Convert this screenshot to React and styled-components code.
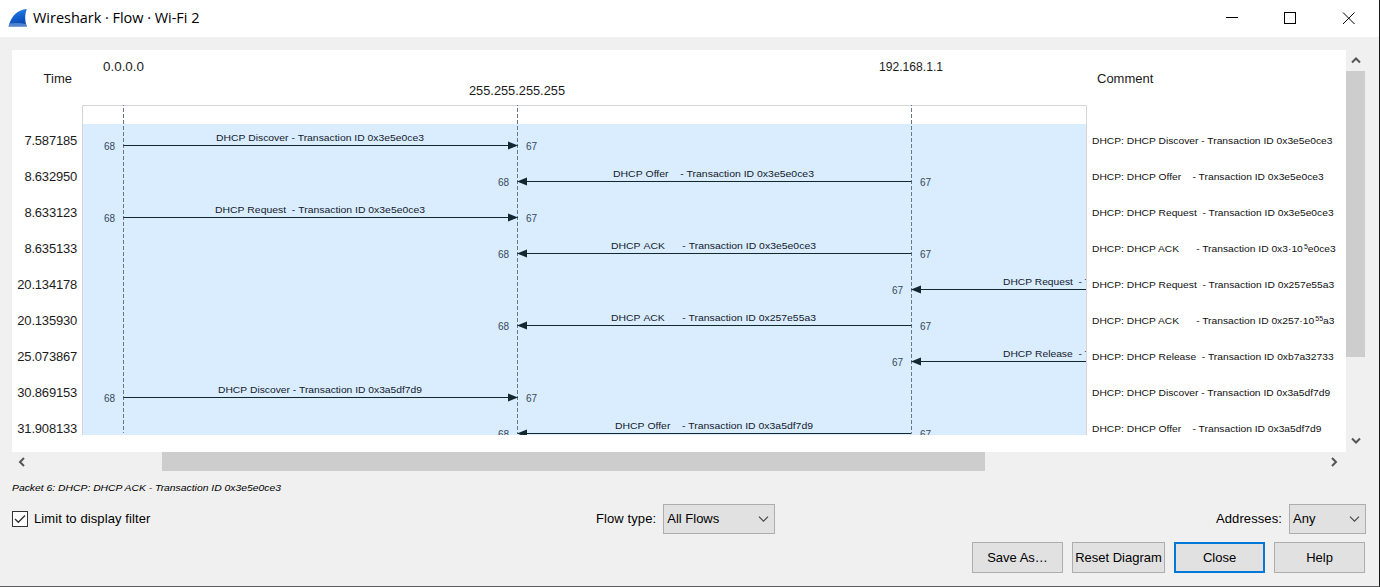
import React from "react";
import styled, { createGlobalStyle } from "styled-components";

const GlobalStyle = createGlobalStyle`
  *, *::before, *::after { box-sizing: border-box; }
  html, body { margin: 0; padding: 0; overflow: hidden; }
  body {
    background: #f0f0f0;
    color: #000;
    font-family: "Liberation Sans", Arial, sans-serif;
    font-size: 13px;
  }
`;

const Window = styled.div`
  display: flex;
  flex-direction: column;
  width: 1380px;
  height: 587px;
  background: #f0f0f0;
  border-right: 1px solid #161616;
  border-bottom: 1px solid #5c5c5e;
  overflow: hidden;
`;

const TitleBar = styled.header`
  display: flex;
  align-items: center;
  height: 37px;
  flex: none;
  padding: 0 24px 0 8px;
  background: #fff;
`;

const Title = styled.h1`
  flex: 1;
  margin: 0 0 0 5px;
  padding-bottom: 2px;
  font: 400 14.5px/20px "Open Sans", "Noto Sans", sans-serif;
  letter-spacing: ${(p) => p.$spacing}px;
  white-space: pre;
`;

const WindowControls = styled.div`
  display: flex;
  gap: 45px;
`;

const Body = styled.main`
  display: flex;
  flex-direction: column;
  padding: 13px 13px 0 12px;
`;

const Viewer = styled.section`
  display: grid;
  grid-template-columns: 1334px 19px;
  grid-template-rows: 402px 19px;
`;

const Canvas = styled.div`
  display: grid;
  grid-template-columns: 70px 1005px 1fr;
  background: #fff;
`;

const Column = styled.div`
  display: flex;
  flex-direction: column;
  min-width: 0;
`;

const ColumnTitle = styled.div`
  height: 73px;
  padding: 21px ${(p) => p.$right || 0}px 0 ${(p) => p.$left || 0}px;
  text-align: ${(p) => p.$align || "left"};
  font-size: 13px;
  line-height: 16px;
  color: #1a1a1a;
`;

const TimeCell = styled.div`
  height: 36px;
  padding-right: 5px;
  text-align: right;
  line-height: 36px;
  letter-spacing: -0.2px;
  color: #1c1c1c;
`;

const CommentCell = styled.div`
  width: max-content;
  height: 36px;
  margin-left: 5px;
  font-size: 9.5px;
  line-height: 36px;
  white-space: pre;
  color: #111;
  transform: scaleX(1.08);
  transform-origin: left center;
`;

const Exponent = styled.span`
  margin-left: 1px;
  font-size: 6.5px;
  line-height: 1;
  vertical-align: 3px;
`;

const Scrollbar = styled.div`
  display: flex;
  flex-direction: ${(p) => (p.$vertical ? "column" : "row")};
  justify-content: space-between;
  padding: ${(p) => (p.$vertical ? "0 0 2px" : "0 2px 0 0")};
`;

const ScrollArrow = styled.div`
  display: flex;
  align-items: center;
  justify-content: center;
  width: ${(p) => (p.$vertical ? 19 : 20)}px;
  height: ${(p) => (p.$vertical ? 20 : 19)}px;
  flex: none;
`;

const ScrollTrack = styled.div`
  display: flex;
  flex: 1;
  padding: ${(p) => (p.$vertical ? "1px 0 0" : "0 0 0 130px")};
`;

const ScrollThumb = styled.div`
  width: ${(p) => (p.$vertical ? "19px" : "823px")};
  height: ${(p) => (p.$vertical ? "286px" : "19px")};
  background: #cdcdcd;
`;

const Status = styled.p`
  width: max-content;
  margin: 10px 0 0;
  font-size: 9.5px;
  line-height: 13px;
  font-style: italic;
  transform: scaleX(1.09);
  transform-origin: left center;
`;

const Options = styled.div`
  display: grid;
  grid-template-columns: 584px auto 1fr;
  align-items: center;
  height: 30px;
  margin-top: 10px;
`;

const CheckLabel = styled.label`
  display: flex;
  align-items: center;
  gap: 6px;
  line-height: 16px;
  letter-spacing: 0.1px;
`;

const CheckBox = styled.span`
  display: grid;
  place-items: center;
  width: 16px;
  height: 16px;
  border: 1px solid #333;
  background: #fff;
`;

const Field = styled.div`
  display: flex;
  align-items: center;
  justify-content: ${(p) => (p.$end ? "flex-end" : "flex-start")};
  gap: 7px;
`;

const FieldLabel = styled.span`
  padding-bottom: 1px;
  letter-spacing: 0.1px;
`;

const Select = styled.div`
  display: flex;
  align-items: center;
  justify-content: space-between;
  width: ${(p) => p.$width}px;
  height: 30px;
  padding: 0 5px 1px 3px;
  border: 1px solid #adadad;
  background: #e1e1e1;
`;

const Actions = styled.div`
  display: flex;
  justify-content: flex-end;
  gap: 9px;
  margin-top: 8px;
  padding-right: 1px;
`;

const Button = styled.button`
  width: ${(p) => p.$width || 91}px;
  height: 31px;
  margin: 0;
  padding: 0;
  border: ${(p) => (p.$primary ? "2px solid #0078d7" : "1px solid #adadad")};
  background: #e1e1e1;
  color: #000;
  font: 13px "Liberation Sans", Arial, sans-serif;
  white-space: nowrap;
`;

const Plot = styled.svg`
  display: block;
  font-family: "Liberation Sans", Arial, sans-serif;
`;

const flows = [
  { time: "7.587185", from: 0, to: 1, label: "DHCP Discover - Transaction ID 0x3e5e0ce3", x: 216, end: 424 },
  { time: "8.632950", from: 2, to: 1, label: "DHCP Offer    - Transaction ID 0x3e5e0ce3", x: 613, end: 814 },
  { time: "8.633123", from: 0, to: 1, label: "DHCP Request  - Transaction ID 0x3e5e0ce3", x: 215, end: 425 },
  { time: "8.635133", from: 2, to: 1, label: "DHCP ACK      - Transaction ID 0x3e5e0ce3", x: 611, end: 816, comment: ["DHCP ACK      - Transaction ID 0x3·10", "5", "e0ce3"] },
  { time: "20.134178", from: 3, to: 2, label: "DHCP Request  - Transaction ID 0x257e55a3", visible: "DHCP Request  - T", x: 1003, end: 1091 },
  { time: "20.135930", from: 2, to: 1, label: "DHCP ACK      - Transaction ID 0x257e55a3", x: 611, end: 816, comment: ["DHCP ACK      - Transaction ID 0x257·10", "55", "a3"] },
  { time: "25.073867", from: 3, to: 2, label: "DHCP Release  - Transaction ID 0xb7a32733", visible: "DHCP Release  - T", x: 1003, end: 1091 },
  { time: "30.869153", from: 0, to: 1, label: "DHCP Discover - Transaction ID 0x3a5df7d9", x: 218, end: 422 },
  { time: "31.908133", from: 2, to: 1, label: "DHCP Offer    - Transaction ID 0x3a5df7d9", x: 615, end: 813 },
];

const lanes = [123.5, 517.5, 911.5, 1305.5];

const hosts = [
  { name: "0.0.0.0", x: 103, width: 41, y: 71 },
  { name: "255.255.255.255", x: 469, width: 96, y: 95 },
  { name: "192.168.1.1", x: 879, width: 64, y: 71 },
];

function FlowArrow({ flow, index }) {
  const y = 145.5 + index * 36;
  const from = lanes[flow.from];
  const to = lanes[flow.to];
  const dir = to > from ? 1 : -1;
  const left = Math.min(from, to);
  const right = Math.max(from, to);
  const leftPort = dir > 0 || flow.to === 1 ? "68" : "67";
  return (
    <g>
      <path d={`M${from} ${y}H${to}`} stroke="#12272e" />
      <path d={`M${to + 0.5 * dir} ${y}l${-10 * dir} -4v8z`} fill="#12272e" />
      <text
        x={flow.x}
        y={y - 4.5}
        fontSize="9.5"
        fill="#13202b"
        textLength={flow.end - flow.x}
        lengthAdjust="spacingAndGlyphs"
      >
        {(flow.visible || flow.label).replace(/ /g, "\u00a0")}
      </text>
      <g fontSize="10" fill="#34495a">
        <text x={left - 19.5} y={y + 4.5}>{leftPort}</text>
        {right < 1086 && <text x={right + 8.5} y={y + 4.5}>67</text>}
      </g>
    </g>
  );
}

function FlowPlot() {
  return (
    <Plot width="1005" height="385" viewBox="82 50 1005 385">
      <path d="M82.5 435V105.5H1086.5V435" fill="none" stroke="#d3d5d8" />
      <rect x="83" y="124" width="1003" height="311" fill="#daedff" />
      {hosts.map((h) => (
        <text key={h.name} x={h.x} y={h.y} fontSize="13" fill="#1c1c1c" textLength={h.width} lengthAdjust="spacingAndGlyphs">
          {h.name}
        </text>
      ))}
      {lanes.slice(0, 3).map((x) => (
        <path key={x} d={`M${x} 105V433`} stroke="#66788a" strokeDasharray="4 2" strokeDashoffset="-3" />
      ))}
      <svg x="82" y="50" width="1004" height="385" viewBox="82 50 1004 385">
        {flows.map((f, i) => (
          <FlowArrow key={f.time} flow={f} index={i} />
        ))}
      </svg>
    </Plot>
  );
}

const arrowPaths = {
  up: "M1 7.5 5 3.5 9 7.5",
  down: "M1 3.5 5 7.5 9 3.5",
  left: "M7 1 3 5 7 9",
  right: "M3 1 7 5 3 9",
};

function Arrow({ direction }) {
  return (
    <ScrollArrow $vertical={direction === "up" || direction === "down"}>
      <svg width="10" height="10" viewBox="0 0 10 10" fill="none" stroke="#555" strokeWidth="2">
        <path d={arrowPaths[direction]} />
      </svg>
    </ScrollArrow>
  );
}

function Chevron() {
  return (
    <svg width="11" height="7" viewBox="0 0 11 7" fill="none" stroke="#444" strokeWidth="1.1">
      <path d="M1 1.7 5.5 6.2 10 1.7" />
    </svg>
  );
}

function FinLogo() {
  return (
    <svg width="20" height="19" viewBox="0 0 20 19">
      <defs>
        <linearGradient id="fin" x1="0" y1="0" x2="0.3" y2="1">
          <stop offset="0" stopColor="#2f8cec" />
          <stop offset="0.55" stopColor="#1260d0" />
          <stop offset="1" stopColor="#0b48ad" />
        </linearGradient>
      </defs>
      <path d="M0.5 17.5C3 7.5 9 0.8 18.8 0C16.8 5 16.6 12 19 17.5Z" fill="url(#fin)" />
      <path d="M0.5 17.5L1.6 14.6Q9 13.2 18 14.9L19 17.5Z" fill="#6f9ddd" opacity="0.7" />
    </svg>
  );
}

export default function App() {
  return (
    <>
      <GlobalStyle />
      <Window>
        <TitleBar>
          <FinLogo />
          <Title $spacing={-0.03}>Wireshark · Flow · Wi-Fi 2</Title>
          <WindowControls>
            <svg width="13" height="13" stroke="#000"><path d="M0 5.5H12" /></svg>
            <svg width="13" height="13" stroke="#000" fill="none"><rect x="0.5" y="0.5" width="11" height="11" /></svg>
            <svg width="13" height="13" stroke="#000" overflow="visible"><path d="M1 0.5 12.5 12M12.5 0.5 1 12" /></svg>
          </WindowControls>
        </TitleBar>
        <Body>
          <Viewer>
            <Canvas>
              <Column>
                <ColumnTitle $align="right" $right={10}>Time</ColumnTitle>
                {flows.map((f) => <TimeCell key={f.time}>{f.time}</TimeCell>)}
              </Column>
              <FlowPlot />
              <Column>
                <ColumnTitle $left={10}>Comment</ColumnTitle>
                {flows.map((f) => (
                  <CommentCell key={f.time}>
                    {"DHCP: "}
                    {f.comment ? (
                      <>{f.comment[0]}<Exponent>{f.comment[1]}</Exponent>{f.comment[2]}</>
                    ) : f.label}
                  </CommentCell>
                ))}
              </Column>
            </Canvas>
            <Scrollbar $vertical>
              <Arrow direction="up" />
              <ScrollTrack $vertical><ScrollThumb $vertical /></ScrollTrack>
              <Arrow direction="down" />
            </Scrollbar>
            <Scrollbar>
              <Arrow direction="left" />
              <ScrollTrack><ScrollThumb /></ScrollTrack>
              <Arrow direction="right" />
            </Scrollbar>
          </Viewer>
          <Status>Packet 6: DHCP: DHCP ACK - Transaction ID 0x3e5e0ce3</Status>
          <Options>
            <CheckLabel>
              <CheckBox>
                <svg width="12" height="10" viewBox="0 0 12 10" fill="none" stroke="#333" strokeWidth="1.4">
                  <path d="M1 5 4.3 8.3 11 1.5" />
                </svg>
              </CheckBox>
              Limit to display filter
            </CheckLabel>
            <Field>
              <FieldLabel>Flow type:</FieldLabel>
              <Select $width={112}>All Flows<Chevron /></Select>
            </Field>
            <Field $end>
              <FieldLabel>Addresses:</FieldLabel>
              <Select $width={77}>Any<Chevron /></Select>
            </Field>
          </Options>
          <Actions>
            <Button>Save As…</Button>
            <Button $width={93}>Reset Diagram</Button>
            <Button $primary>Close</Button>
            <Button>Help</Button>
          </Actions>
        </Body>
      </Window>
    </>
  );
}
